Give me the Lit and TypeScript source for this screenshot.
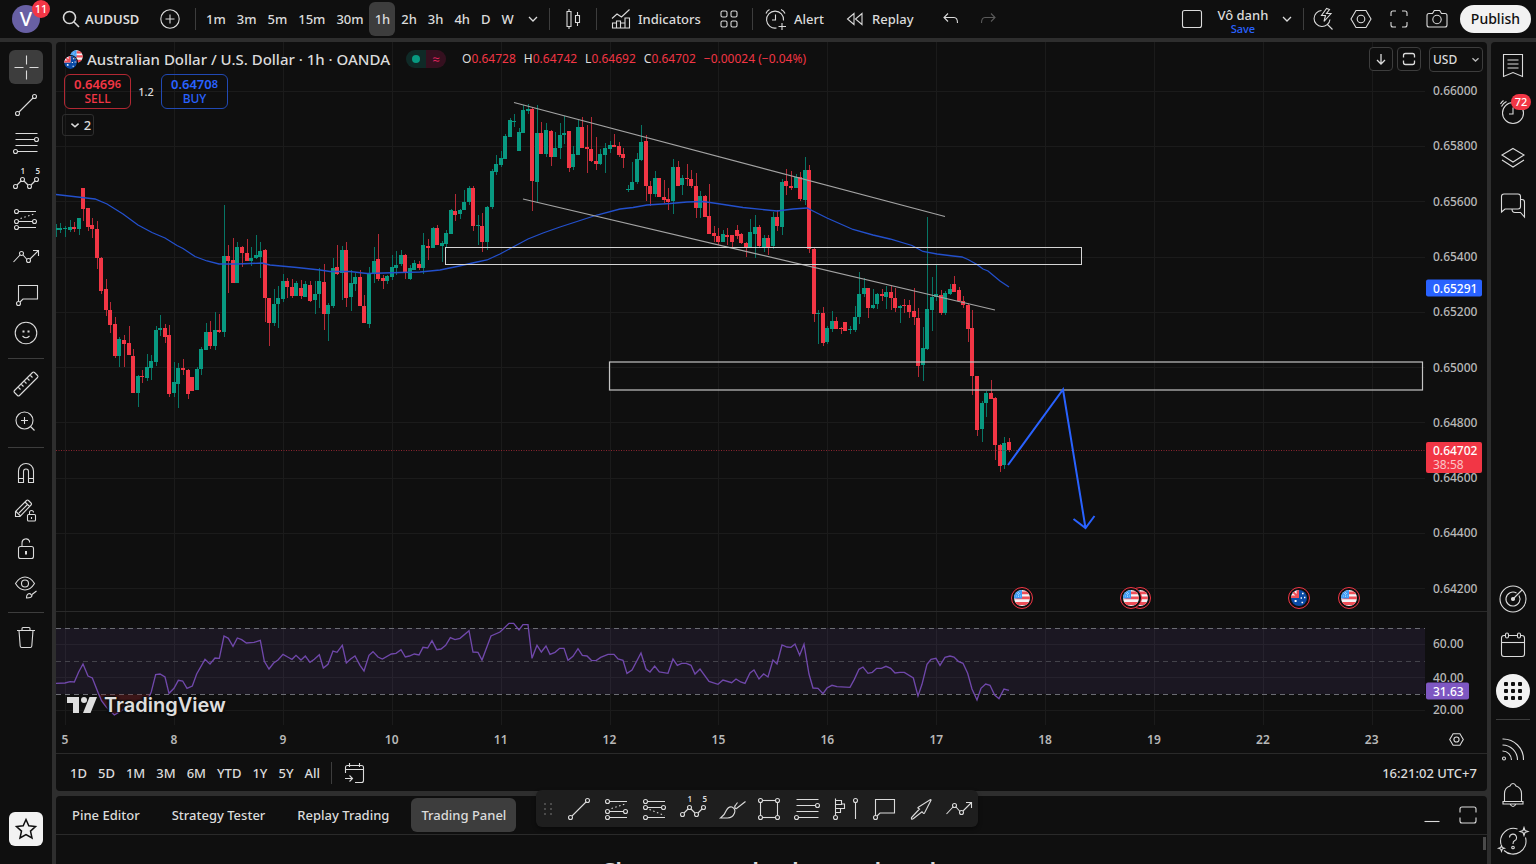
import { LitElement, html, svg, css } from "lit";
import { customElement } from "lit/decorators.js";

/* Area of the plot in chart units: x 56..1425, y 42..725 */
const PLOT = { x: 56, y: 42, w: 1369, h: 683 };
const STEP = 4.5375;
const FIRST_BAR = -2;
const DAY0 = 65;

/* direction, high, body top, body bottom, low */
const BARS = `
g224,228,230,237 g223,228,230,233 g226,228,229,237 g220,227,230,232 r222,227,229,232 g218,218,229,235
r188,188,209,221 r208,208,227,231 r218,225,229,238 r221,229,258,269 r257,258,291,294 r279,289,310,316
r302,310,325,333 r317,324,356,358 g337,339,356,367 r335,340,344,367 r326,343,355,355 r349,356,393,393
g375,376,393,407 r370,376,377,383 g354,367,378,381 g355,361,368,380 g326,330,362,366 g315,328,330,336
r324,328,337,343 r325,335,394,397 g362,382,393,397 g363,368,384,408 r359,368,370,375 r369,370,394,399
r377,377,391,391 g367,369,390,390 g347,349,369,375 g323,332,350,350 r321,332,346,349 g312,330,346,350
r314,330,332,333 g205,256,332,337 r245,256,261,293 r238,260,283,283 g242,247,283,283 r246,247,253,267
r239,253,261,261 g247,258,261,266 g235,255,258,259 g242,251,257,278 r249,250,298,322 r298,298,323,346
g289,304,323,326 g286,298,304,328 g274,281,299,302 r278,281,287,298 r279,287,296,298 g281,283,296,296
r280,288,296,299 g281,284,297,297 r281,285,301,302 g281,294,300,314 g268,281,294,308 r264,282,314,330
g303,305,314,341 g258,268,306,308 r245,267,274,275 g246,250,273,300 r242,250,298,307 g270,283,297,311
g273,277,284,291 r270,277,306,306 r295,306,323,323 g267,274,324,328 g247,261,274,283 r234,259,279,281
r275,278,281,289 g275,276,281,284 g255,267,277,280 g251,265,268,275 g250,255,264,266 r254,255,273,279
g265,268,279,280 g260,263,270,270 r261,264,268,270 g233,245,268,274 r239,246,248,260 g227,228,248,248
r225,228,245,245 g241,243,246,262 g230,233,244,248 g209,210,234,234 r194,211,215,221 g209,210,214,219
g190,202,210,210 g186,188,202,205 r186,188,226,231 g215,225,226,245 r213,226,242,252 g206,207,242,250
g169,171,207,209 g155,164,172,175 g151,158,165,167 g134,136,159,159 g118,120,137,137 g114,121,122,127
g128,132,151,151 g105,110,133,133 g104,109,111,114 r107,109,181,211 g105,133,182,202 r122,133,154,154
g123,130,154,157 r130,131,157,166 g132,148,157,157 g123,135,148,159 g116,133,135,144 r131,131,168,172
g146,154,167,170 g120,127,155,155 r117,127,148,148 r125,147,149,173 r117,149,161,162 r137,161,164,170
g149,154,164,165 g143,148,155,173 g141,145,149,153 r134,145,147,147 r142,146,155,157 r148,154,158,168
g185,189,190,192 g162,182,190,190 g153,159,182,184 g125,142,160,161 r135,141,186,201 r181,186,194,206
g171,178,194,197 r178,178,197,197 r180,197,200,203 r188,199,202,210 g159,167,201,214 r161,167,186,186
g175,178,185,195 r164,178,179,186 r170,179,186,188 r173,186,208,218 g191,196,208,218 r195,196,217,217
r184,216,234,234 r226,233,236,242 r228,236,242,245 g230,234,242,242 r228,235,237,245 r235,235,242,248
r225,230,236,239 r233,234,243,244 r242,243,247,257 g219,232,247,248 g215,227,234,258 r225,227,246,248
g235,238,247,252 r235,238,247,255 g212,217,246,249 r210,217,226,231 g179,182,227,235 r169,181,186,195
r171,186,188,190 g174,177,188,188 r172,177,199,201 g157,170,200,205 r165,170,249,253 r248,249,314,322
g310,313,314,344 r307,313,343,346 g326,328,342,344 g311,321,329,332 r317,321,329,329 r327,328,329,334
r322,322,331,331 g326,329,330,334 g306,317,330,332 g272,294,317,324 g278,288,294,297 r288,288,308,318
g289,305,308,309 g293,294,304,309 r289,294,296,301 g286,292,297,309 r286,292,298,310 r288,298,308,312
g305,306,308,323 r299,305,306,313 r300,305,312,318 r288,311,317,325 r308,318,366,377 g327,348,365,381
g217,309,349,350 g277,297,310,331 g265,294,297,301 r290,295,313,315 g291,293,313,315 g284,289,294,295
r276,284,292,292 r287,290,301,301 r296,301,305,308 r303,305,329,342 r310,328,376,395 r376,376,430,436
g401,403,429,442 g391,393,403,417 r380,393,399,399 r397,398,445,460 r444,445,466,472 g437,443,465,469
r438,442,450,452`
  .trim()
  .split(/\s+/)
  .map((t, i) => {
    const [high, top, bottom, low] = t.slice(1).split(",").map(Number);
    return { up: t[0] === "g", high, top, bottom, low, x: Math.round(DAY0 + STEP * (FIRST_BAR + i)) };
  });

const AVERAGE =
  "56,194.5 82,197.5 95,199 107,204 123,214 138,225 152,232.5 165,238 177,245.5 183,248.5 195,256.5 207,261 219,264 237,264 262,263 270,265 297,267.5 320,270 330,271.5 350,271.5 367,273.5 400,272.5 420,272 440,270 457,266.5 477,262 487,260 500,254 513,247 528,239 543,233 560,227 577,221.5 597,215 620,209 633,207.5 647,205 670,203.5 687,202 703,201.5 717,203.5 743,207.5 767,210 777,211 793,209 807,208 813,211 827,218 853,229.5 873,235 890,239 912,245.5 923,251.5 937,254 953,256 962,257 968,259.5 977,264.5 983,269 988,271 1000,281 1009,287";

/* Oscillator samples, three units to a chart unit */
const RSI =
  "18,250 45,249 60,245 73,246 86,216 99,192 114,228 127,234 145,280 155,303 170,323 193,345 215,332 235,318 262,322 285,305 300,285 304,275 317,224 330,222 345,231 357,280 372,265 385,241 398,243 411,265 427,258 440,222 465,178 480,192 495,174 508,175 522,108 535,115 549,139 562,114 575,119 589,129 612,127 631,121 643,184 657,207 671,189 684,180 699,163 713,171 726,178 738,166 753,180 766,168 780,187 793,178 808,164 820,204 834,193 849,153 861,157 877,136 889,189 902,177 915,168 930,196 942,213 957,166 969,155 984,171 997,177 1024,162 1038,160 1053,149 1066,171 1078,168 1093,162 1107,165 1119,142 1133,144 1146,122 1160,149 1173,147 1187,136 1201,113 1215,119 1230,115 1257,92 1269,156 1284,157 1296,180 1323,108 1350,96 1365,82 1377,70 1391,70 1407,90 1419,74 1434,74 1446,175 1461,136 1474,156 1488,138 1500,163 1515,157 1529,145 1542,145 1554,181 1569,169 1584,146 1597,166 1611,168 1624,181 1638,182 1652,172 1674,163 1692,163 1704,177 1719,181 1731,220 1746,210 1773,159 1788,207 1800,216 1814,198 1828,216 1854,220 1869,177 1882,196 1895,190 1909,190 1923,196 1935,222 1950,207 1977,244 2004,253 2019,240 2045,248 2058,237 2072,246 2085,250 2100,219 2112,210 2127,237 2141,222 2154,231 2169,180 2181,192 2196,135 2211,141 2223,142 2235,132 2249,166 2262,133 2277,222 2289,264 2304,265 2319,281 2331,264 2346,256 2361,260 2400,262 2413,238 2427,208 2439,201 2454,220 2467,217 2480,205 2494,205 2508,199 2522,205 2535,219 2550,217 2563,217 2590,234 2604,288 2616,253 2631,193 2643,178 2658,175 2670,196 2685,172 2700,168 2712,171 2725,184 2739,190 2753,220 2766,267 2781,300 2793,265 2807,252 2820,256 2834,285 2847,296 2862,267 2877,271";

const PRICES = ["0.66000", "0.65800", "0.65600", "0.65400", "0.65200", "0.65000", "0.64800", "0.64600", "0.64400", "0.64200"].map(
  (label, i) => ({ label, y: 91.2 + i * 55.28 }),
);
const LEVELS = [
  { label: "60.00", y: 644.5 },
  { label: "40.00", y: 677.5 },
  { label: "20.00", y: 710 },
];
const DAYS = ["5", "8", "9", "10", "11", "12", "15", "16", "17", "18", "19", "22", "23"].map((label, i) => ({
  label,
  x: DAY0 + i * STEP * 24,
}));

const pctX = (x: number) => `left:${(((x - PLOT.x) / PLOT.w) * 100).toFixed(2)}%`;
const pctY = (y: number) => `top:${(((y - PLOT.y) / PLOT.h) * 100).toFixed(2)}%`;

const usFlag = svg`<circle cx="8" cy="8" r="8" fill="#f4f4f6"/>
  <path d="M8 1.6h4.8A8 8 0 0 1 15 4.2H8zM8 6.6h7.9v2.7H.1V9zM1 12h14a8 8 0 0 1-3.2 3H4.200A8 8 0 0 1 1 12z" fill="#ef4f58"/>
  <path d="M8 0v8.600H0A8 8 0 0 1 8 0z" fill="#3f9df5"/>
  <path d="M3 3.500h4M2 6h5M4.500 2v6" stroke="#bfe0ff" stroke-width=".7" stroke-dasharray="1 1"/>`;
const auFlag = svg`<circle cx="8" cy="8" r="8" fill="#0a4aa5"/>
  <path d="M8 0v8H0A8 8 0 0 1 8 0z" fill="#f3f3f5"/>
  <path d="M5.600 .4 8 0v8H5.600zM.2 5.400H8V8H0zM1.600 3 3 1.500 8 6.500V8H7z" fill="#ef4f58"/>
  <path d="M3.500 11h2.200M4.600 9.900v2.200M11 3.500h1.600M10.500 12.500h1.600M13 7.500h1.400M9.600 8h1.400" stroke="#fff" stroke-width="1.300"/>`;

const node = (x: number, y: number) => svg`<circle cx=${x} cy=${y} r="2"/>`;

const ICONS: Record<string, unknown> = {
  search: svg`<circle cx="12.500" cy="12.500" r="6" stroke-width="1.600"/><path d="m17 17 5 5" stroke-width="1.600"/>`,
  plus: svg`<circle cx="14" cy="14" r="9.200"/><path d="M14 9.500v9M9.500 14h9"/>`,
  chevron: svg`<path d="m10 12 4 4 4-4" stroke-width="1.300"/>`,
  caret: svg`<path d="m9 12 5 4.500 5-4.500" stroke-width="2.200"/>`,
  candles: svg`<path d="M8 6.500h4v15H8zM10 4v2.500M10 21.500V24M16.500 10.500h4v7h-4zM18.500 7v3.500M18.500 17.500V21"/>`,
  indicators: svg`<path d="M5.500 23v-5h4v5M9.500 19v-3h4v7M13.500 18h4.500v5M18 20v-7h4.500v10h-17v-1M5 13.500l5-4.500 4.500 3L22.500 4.500"/>`,
  layout: svg`<rect x="6" y="6" width="6" height="6" rx="1.500"/><rect x="16" y="6" width="6" height="6" rx="1.500"/><rect x="6" y="16" width="6" height="6" rx="1.500"/><rect x="16" y="16" width="6" height="6" rx="1.500"/>`,
  alert: svg`<path d="M21.500 15.500a8.500 8.500 0 1 0-7 7.500M4 8.500a7 7 0 0 1 3.500-4M19 4.500a7 7 0 0 1 4 4M13.500 9.500v5.500H10M20 18v7M16.500 21.500h7.500"/>`,
  replay: svg`<path d="M13 8.500v11L6.500 14zM21 8.500v11L14.500 14z"/>`,
  undo: svg`<path d="m11 8.500-4 4 4 4M7.500 12.500H17q3.500 0 3.500 5.500"/>`,
  redo: svg`<path d="m17 8.500 4 4-4 4M20.500 12.500H11q-3.500 0-3.500 5.500"/>`,
  square: svg`<rect x="4.500" y="5.500" width="19" height="17" rx="2"/>`,
  quick: svg`<path d="M12.500 5.500a8 8 0 1 0 8.500 9M18.500 19.500l5 5M17.500 3.500l-5 7h4l-1.500 6 7-8h-4.500l3-4z"/>`,
  settings: svg`<path d="M9 5.500h10l5 8.500-5 8.500H9L4 14z"/><circle cx="14" cy="14" r="3.800"/>`,
  full: svg`<path d="M6 11V8q0-2 2-2h3M17 6h3q2 0 2 2v3M22 17v3q0 2-2 2h-3M11 22H8q-2 0-2-2v-3"/>`,
  camera: svg`<path d="M6 8.500h3.500l1.800-3h5.400l1.800 3H22q2 0 2 2V20q0 2-2 2H6q-2 0-2-2v-9.500q0-2 2-2z"/><circle cx="14" cy="14.500" r="4.200"/>`,
  cross: svg`<path d="M14.500 2.500v9M14.500 17.500v9M2.500 14.500h9M17.500 14.500h9"/>`,
  trend: svg`${node(5.5, 22.5)}${node(22.5, 5.5)}<path d="M7 21 21 7"/>`,
  fib: svg`<path d="M3.500 4.500h22M3.500 10.500h19M3.500 16.500h22M6 22.500h19.500"/>${node(24.5, 10.5)}${node(3.5, 22.5)}`,
  pattern: svg`${node(3.5, 19.5)}${node(10.5, 12.5)}${node(17.5, 19.5)}${node(24.5, 12.5)}<path d="m5 18 4-4M12 14l4 4M19 18l4-4"/><text x="8.500" y="7">1</text><text x="23.500" y="7">5</text>`,
  forecast: svg`${node(4.5, 6.5)}${node(4.5, 16.5)}${node(22.500, 16.5)}${node(4.5, 22.5)}<path d="M6.500 6.500H24M6.500 16.500h14M6.500 22.500H24"/><path d="m8.500 13.500 15-5" stroke-dasharray="1.500 2.500"/>`,
  position: svg`${node(4.5, 6.5)}${node(4.5, 12.5)}${node(22.500, 12.5)}${node(4.5, 22.5)}<path d="M6.500 6.500H24M6.500 12.500h14M6.500 22.500H24"/><path d="m8.500 14.500 15 6" stroke-dasharray="1.500 2.500"/>`,
  zigzag: svg`<path d="M1.500 19 8 12M11 12l4 4.500M18 16l8.500-8.500M21 7.500h5.500V13"/>${node(9.5, 10.5)}${node(16.5, 17.5)}`,
  callout: svg`<path d="M6.500 20.500V4.500h19v13.500H11L8 21"/>${node(6.5, 22.5)}`,
  smile: svg`<circle cx="14" cy="14" r="10.800"/><path d="M10.500 17q3.500 3.500 7 0"/><path d="M11.500 11.500v2M16.500 11.500v2" stroke-width="2"/>`,
  ruler: svg`<path d="m2.500 20.500 18-18q1-1 2 0l3 3q1 1 0 2l-18 18q-1 1-2 0l-3-3q-1-1 0-2zM6 17l2.500 2.500M9 14l2.500 2.500M12 11l2.500 2.500M15 8l2.500 2.500M18 5l2.500 2.500"/>`,
  zoom: svg`<circle cx="12.500" cy="12.500" r="8.500"/><path d="m18.500 18.500 4 4M12.500 9v7M9 12.500h7"/>`,
  magnet: svg`<path d="M6.500 23.500V12a7.500 7.500 0 0 1 15 0v11.500h-5V12.500a2.500 2.500 0 0 0-5 0v11zM6.500 19.500h5M16.500 19.500h5"/>`,
  pencil: svg`<path d="M3.500 19.500v-5l11-11q1-1 2 0l2.500 2.500q1 1 0 2l-11 11.500zM4 14.500l4.500 4.500M13 5l4.500 4.500M7 16l8-8"/><rect x="15.500" y="17.500" width="8" height="6.500" rx="1"/><path d="M17.500 17.500v-2a2 2 0 0 1 4 0M19.500 20v2"/>`,
  lock: svg`<rect x="6.500" y="11.500" width="15" height="12" rx="2"/><path d="M10 11.500V8a4 4 0 0 1 7.500-2v1.500"/><path d="M14 16v3.500" stroke-width="2"/>`,
  eye: svg`<path d="M3.500 10.500q4-6.500 9.500-6.500t9.500 6.500Q18.500 17 13 17t-9.500-6.500z"/><circle cx="13" cy="10.500" r="3.500"/><path d="M14.500 25q0-4.500 3.500-4.500l2 2q0 2.500-5.500 2.500zM20 21.500l4.500-3.500"/>`,
  trash: svg`<path d="M5 6.500h18M10 6V4.500q0-1 1-1h6q1 0 1 1V6M7 6.500l1.200 15.500q.1 1.500 1.500 1.500h8.600q1.400 0 1.500-1.500L21 6.500"/>`,
  star: svg`<path d="m14 4.500 2.800 6.300 6.700.7-5 4.600 1.500 6.900-6-3.500L8 23l1.500-6.900-5-4.600 6.700-.7z" stroke-width="1.500"/>`,
  brush: svg`<path d="M3.500 23Q8 19.500 9 16q2.500-5 6-4 4 2 2.500 6-2 5-7 5zM18 10.500q-1 2.500 1.500 3.500M19.500 13.500 28.500 6.500M18 11l2.500-3.500"/>`,
  rect: svg`<rect x="5.500" y="5.500" width="17" height="17"/>${[5.5, 22.5].map((x) => [5.5, 22.5].map((y) => svg`<circle cx=${x} cy=${y} r="2" fill="#1e1e1e"/>`))}`,
  profile: svg`<path d="M4.500 3.500v17M4.500 5.500h6v4h-6M10.500 9h3v4.500h-9M4.500 13.500h5v4h-5M24.500 7v17"/>${node(4.5, 22.5)}${node(24.5, 5.5)}`,
  arrow: svg`<path d="M4.500 24q-.5-1 .5-2l7.500-8-1.500-1q-.3-.5.3-.8L23.500 4.500q.8 0 .5.800L17.500 18q-.5.700-1 .3l-1.500-1.500L6.500 23.500q-1.200 1-2 .5z"/>`,
  watch: svg`<path d="M4.500 2.500h19v22L14 20.500l-9.500 4zM8.500 8h11M8.500 12h11M8.500 16h11"/>`,
  clock: svg`<circle cx="14" cy="15" r="10.500"/><path d="M14 9.500V16h-4M2.500 8.500q1.500-3.500 5-5M1.500 6q1-2 3-3.500"/>`,
  layers: svg`<path d="m14 4.500 11 6.500-11 7-11-7zM3 16l11 7 11-7"/>`,
  chat: svg`<path d="M2.500 22V6.500q0-2.500 2.500-2.500h14q2.500 0 2.500 2.500v10q0 2.500-2.500 2.500H6zM21.500 9.500h1.500q2.500 0 2.500 2.500v15l-4-4.500h-5.500q-3 0-3-3.500"/>`,
  target: svg`<circle cx="14" cy="14" r="13"/><path d="M20 10.500A7 7 0 1 1 17.500 8M14 14l9-9"/><circle cx="14" cy="14" r="1.500" fill="currentColor"/>`,
  calendar: svg`<rect x="2.500" y="4.500" width="23" height="21" rx="2.500"/><path d="M2.500 11.500h23"/><rect x="6.500" y="2" width="3" height="5" rx="1.500" fill="#0f0f0f"/><rect x="18.500" y="2" width="3" height="5" rx="1.500" fill="#0f0f0f"/>`,
  feed: svg`<path d="M3.500 4A20.500 20.500 0 0 1 24.500 25M3.500 10A15 15 0 0 1 18.500 25M3.500 16A9 9 0 0 1 12.500 25"/><circle cx="5" cy="23.500" r="1.500"/>`,
  bell: svg`<path d="M5.500 20v-7.500a8 8 0 0 1 5.500-7.500q1-2.500 3-2.500t3 2.500a8 8 0 0 1 5.500 7.500V20M4 20.500h20v2.500H4zM11 23q3 5 6 0"/>`,
  help: svg`<path d="M18.500 2A13 13 0 0 0 2 17.500M5 23.500a13 13 0 0 0 21.500-13M10.500 10.500a3.500 3.500 0 1 1 5 3.300q-1.500.7-1.500 3.200"/><circle cx="14" cy="20.500" r="1.300"/><path d="m25 .5 1 3 3 1-3 1-1 3-1-3-3-1 3-1zM2.500 18.500l.8 2 2.200.8-2.200.8-.8 2.200-.8-2.200-2.200-.8 2.200-.8z"/>`,
  goto: svg`<path d="M5.500 14V8.500q0-2 2-2h14q2 0 2 2v13q0 2-2 2H15M5.500 10.500h18M9.500 4v4M19.500 4v4M5 19.500h7M9.500 16.500l3 3-3 3"/>`,
  down: svg`<path d="M14 9v10M10 15l4 4 4-4" stroke-width="1.300"/>`,
  expand: svg`<path d="M8.500 12.500v-2q0-2 2-2h7q2 0 2 2v2M8.500 15.500v2q0 2 2 2h7q2 0 2-2v-2" stroke-width="1.300"/>`,
  maximize: svg`<path d="M6 11.500V8q0-2 2-2h12q2 0 2 2v3.500M6 16.500V20q0 2 2 2h12q2 0 2-2v-3.500"/>`,
  minimize: svg`<path d="M6.500 20.500h15"/>`,
};

const icon = (name: string) =>
  html`<svg class="icon" viewBox="0 0 28 28" aria-hidden="true">${ICONS[name]}</svg>`;

@customElement("app-root")
export class AppRoot extends LitElement {
  static styles = css`
    :host {
      display: grid;
      grid-template: 38px minmax(0, 1fr) / 52px minmax(0, 1fr) 45px;
      gap: 4px;
      height: 100vh;
      overflow: hidden;
      background: #2e2e2e;
      color: #dbdbdb;
      font: 500 13px/18px "Noto Sans", "Open Sans", sans-serif;
    }
    * { box-sizing: border-box; }
    button {
      display: flex;
      align-items: center;
      justify-content: center;
      margin: 0;
      padding: 0;
      border: 0;
      background: none;
      color: inherit;
      font: inherit;
      white-space: nowrap;
    }
    .icon {
      display: block;
      width: 28px;
      height: 28px;
      flex: none;
      overflow: visible;
      fill: none;
      stroke: currentColor;
      stroke-width: 1.1;
    }
    .icon text { fill: currentColor; stroke: none; font-size: 8px; font-weight: 600; }
    .rule { flex: none; width: 1px; height: 22px; background: #3d3d3d; }

    .top { grid-column: 1 / -1; display: flex; align-items: center; background: #0f0f0f; }
    .avatar {
      position: relative; flex: none;
      width: 28px; height: 28px; margin-left: 12px;
      border-radius: 50%; background: #6860a4; color: #fff; font-size: 20px;
    }
    .badge {
      position: absolute; top: -5px; left: 20px;
      min-width: 18px; height: 18px; border-radius: 9px;
      background: #f23645; color: #fff; font-size: 11px; line-height: 18px; text-align: center;
    }
    .symbol { flex: none; width: 80px; margin-left: 17px; justify-content: flex-start; font-weight: 600; }
    .add { flex: none; width: 38px; margin-right: 6px; margin-left: 14px; }
    .span { height: 34px; padding: 0 5px 0 6px; border-radius: 6px; }
    .span.on { background: #3d3d3d; }
    .spans { display: flex; flex: none; width: 353px; padding-left: 4px; }
    .spans .more { width: 28px; }
    .tool { height: 34px; flex: none; }
    .style { width: 46px; }
    .indicators { width: 114px; justify-content: flex-start; padding-left: 10px; gap: 3px; }
    .grid { width: 36px; margin-right: 5px; }
    .alert { width: 84px; justify-content: flex-start; padding-left: 9px; gap: 4px; }
    .replay { width: 95px; justify-content: flex-start; padding-left: 4px; gap: 3px; }
    .history { width: 37px; }
    .dim { color: #5a5a5a; }
    .right { display: flex; align-items: center; margin-left: auto; padding-right: 5px; }
    .named { flex-direction: column; width: 64px; }
    .named small { color: #2962ff; font-size: 11px; line-height: 9px; }
    .menu { width: 24px; margin-right: 4px; }
    .act { width: 38px; height: 34px; }
    .publish {
      height: 28px; margin-left: 4px; padding: 0 11px;
      border-radius: 14px; background: #f2f2f2; color: #0f0f0f; font-size: 14px;
    }

    .left {
      display: flex; flex-direction: column; align-items: center; gap: 4px;
      padding: 8px 0 18px; border-radius: 0 4px 0 0; background: #0f0f0f;
    }
    .left button { width: 34px; height: 34px; flex: none; border-radius: 6px; }
    .left .on { background: #3d3d3d; }
    .left hr { flex: none; width: 36px; height: 1px; margin: 4px 0; border: 0; background: #3d3d3d; }
    .left .fav { margin-top: auto; background: #f2f2f2; color: #0f0f0f; }

    .side {
      display: flex; flex-direction: column; align-items: flex-start; gap: 2px;
      padding: 2px 0 1px; border-radius: 4px 0 0 0; background: #0f0f0f;
    }
    .side button { position: relative; flex: none; width: 44px; height: 44px; }
    .side .count {
      position: absolute; top: 4px; left: 20px; width: 20px; height: 16px;
      border-radius: 8px; background: #f23645; color: #fff; font-size: 11px; line-height: 16px;
    }
    .side .gap { flex: 1; }
    .side hr { flex: none; width: 34px; height: 1px; margin: 4px 5px 5px; border: 0; background: #3d3d3d; }
    .apps { display: grid; grid-template-columns: repeat(3, 4px); gap: 3px; width: 34px; height: 34px; place-content: center; border-radius: 50%; background: #f2f2f2; }
    .apps i { height: 4px; border-radius: 1px; background: #0f0f0f; }

    .centre { display: grid; grid-template-rows: minmax(0, 1fr) 68px; gap: 5px; min-width: 0; }
    .chart {
      display: grid; grid-template: minmax(0, 1fr) 28px 38px / minmax(0, 1fr) 62px;
      border-radius: 4px; background: #0f0f0f; overflow: hidden;
    }
    .plot { position: relative; min-width: 0; overflow: hidden; }
    .canvas { position: absolute; inset: 0; width: 100%; height: 100%; }
    .axis { position: relative; font-size: 12px; color: #b8b8b8; }
    .tick { position: absolute; left: 8px; line-height: 16px; transform: translateY(-50%); }
    .tag {
      position: absolute; left: 1px; width: 56px; padding: 1px 0 1px 7px; border-radius: 2px;
      color: #fff; line-height: 15px; transform: translateY(-50%);
    }
    .tag.blue { background: #2962ff; }
    .tag.purple { width: 43px; background: #7e57c2; }
    .tag.red { background: #f23645; transform: translateY(-9px); }
    .tag small { display: block; font-size: 12px; line-height: 14px; color: #fbc4c8; font-weight: 400; }
    .split { position: absolute; left: 0; right: 0; height: 1px; background: #2a2a2a; }
    .days { position: relative; overflow: hidden; font-size: 12px; font-weight: 600; color: #b8b8b8; }
    .day { position: absolute; top: 7px; line-height: 16px; transform: translateX(-50%); }
    .corner .icon { width: 19px; height: 19px; stroke-width: 1.6; }
    .ranges {
      grid-column: 1 / -1; display: flex; align-items: center;
      padding: 0 10px 0 8px; border-top: 1px solid #2a2a2a;
    }
    .ranges button { height: 28px; padding: 0 5px 0 6px; }
    .ranges .rule { margin: 0 2px 0 6px; }
    .ranges .clock { margin-left: auto; padding: 0; }

    .legend { position: absolute; top: 6px; left: 6px; display: flex; flex-direction: column; gap: 4px; }
    .title { display: flex; align-items: center; height: 22px; padding-left: 2px; }
    .pair { position: relative; width: 19px; height: 19px; margin-right: 4px; }
    .pair svg { position: absolute; width: 13px; height: 13px; border-radius: 50%; }
    .pair .us { top: 0; right: 0; }
    .pair .au { bottom: 0; left: 0; box-shadow: 0 0 0 1px #0f0f0f; }
    h1 { margin: 0; font-size: 15px; line-height: 20px; font-weight: 500; white-space: nowrap; }
    .status {
      display: grid; grid-template: 18px / 20px 20px; place-items: center;
      margin: 0 16px; border-radius: 9px; color: #e0245e;
      background: linear-gradient(90deg, #0f2a27 50%, #35101f 50%);
    }
    .status i { width: 8px; height: 8px; border-radius: 50%; background: #089981; }
    .ohlc { display: flex; gap: 8px; font-size: 12px; font-weight: 400; }
    .ohlc b { color: #f23645; font-weight: 400; }
    .quotes { display: flex; align-items: center; padding-left: 2px; }
    .quote {
      flex-direction: column; width: 67px; height: 35px; border: 1px solid #b22833; border-radius: 6px;
      color: #f23645; font-size: 12px; line-height: 14px;
    }
    .quote.buy { border-color: #2149b4; color: #2962ff; }
    .quote strong { font-size: 13px; font-weight: 600; line-height: 15px; }
    .quote sup { font-size: 11px; line-height: 1px; vertical-align: 1px; }
    .spread { width: 30px; font-size: 11px; text-align: center; }
    .fold { width: 32px; height: 22px; margin-top: 1px; border: 1px solid #2e2e2e; border-radius: 3px; }
    .fold .icon { width: 20px; height: 20px; margin-right: -1px; }
    .panes { position: absolute; top: 5px; right: 4px; display: flex; gap: 4px; }
    .panes button { width: 24px; height: 24px; border: 1px solid #3d3d3d; border-radius: 4px; background: #0f0f0f; }
    .currency { position: absolute; top: 5px; left: 4px; width: 54px; height: 25px; }
    .currency select {
      appearance: none; width: 100%; height: 100%; padding: 0 3px; border: 1px solid #3d3d3d; border-radius: 4px;
      background: #0f0f0f; color: #dbdbdb; font: inherit;
    }
    .currency .icon { position: absolute; top: 4px; right: -1px; width: 17px; height: 17px; pointer-events: none; }
    .event { position: absolute; width: 22px; height: 22px; padding: 2px; border: 1px solid #f23645; border-radius: 50%; background: #0f0f0f; transform: translate(-50%, -50%); }
    .event svg { display: block; width: 16px; height: 16px; }
    .brand {
      position: absolute; bottom: 8px; left: 11px; display: flex; align-items: center; gap: 7px;
      color: #dedede; font: 600 20px/24px Inter, sans-serif;
      text-shadow: 0 0 2px #0f0f0f, 1px 1px 1px #0f0f0f, -1px -1px 1px #0f0f0f, 2px 0 2px #0f0f0f, -2px 0 2px #0f0f0f;
    }
    .brand svg { display: block; width: 30px; height: 16px; fill: #dedede; }

    .bottom { position: relative; border-radius: 4px 4px 0 0; background: #0f0f0f; min-width: 0; }
    .tabs { display: flex; align-items: center; gap: 12px; height: 39px; padding: 0 5px 0 6px; border-bottom: 1px solid #2a2a2a; }
    .tabs button { height: 34px; padding: 0 10px; border-radius: 6px; }
    .tabs .on { background: #3d3d3d; }
    .tabs .win { width: 28px; padding: 0; }
    .tabs .first { margin-left: auto; margin-right: -4px; }
    .body { position: relative; height: 29px; overflow: hidden; }
    .body h2 { margin: 20px 0 0 544px; font-size: 24px; line-height: 32px; font-weight: 600; white-space: nowrap; }
    .thumb { position: absolute; top: 2px; right: 1px; width: 3px; height: 13px; background: #4a4a4a; }
    .drawbar {
      position: absolute; top: -6px; left: 480px; display: flex; align-items: center;
      height: 37px; border-radius: 6px; background: #1e1e1e; box-shadow: 0 2px 4px rgba(0, 0, 0, 0.4);
    }
    .drawbar button { width: 38px; height: 37px; }
    .grip { display: grid; grid-template: repeat(3, 2px) / repeat(2, 2px); gap: 3px 4px; width: 24px; place-content: center; }
    .grip i { background: #4a4a4a; }
  `;

  private top() {
    const spans = ["1m", "3m", "5m", "15m", "30m", "1h", "2h", "3h", "4h", "D", "W"];
    return html`<header class="top">
      <button class="avatar" aria-label="Profile">V<span class="badge">11</span></button>
      <button class="symbol">${icon("search")}AUDUSD</button>
      <button class="add" aria-label="Compare">${icon("plus")}</button>
      <span class="rule"></span>
      <div class="spans">
        ${spans.map((s) => html`<button class="span ${s === "1h" ? "on" : ""}">${s}</button>`)}
        <button class="more" aria-label="More intervals">${icon("chevron")}</button>
      </div>
      <span class="rule"></span>
      <button class="tool style" aria-label="Chart type">${icon("candles")}</button>
      <span class="rule"></span>
      <button class="tool indicators">${icon("indicators")}Indicators</button>
      <button class="tool grid" aria-label="Templates">${icon("layout")}</button>
      <span class="rule"></span>
      <button class="tool alert">${icon("alert")}Alert</button>
      <button class="tool replay">${icon("replay")}Replay</button>
      <button class="tool history" aria-label="Undo">${icon("undo")}</button>
      <button class="tool history dim" aria-label="Redo">${icon("redo")}</button>
      <div class="right">
        <button class="act" aria-label="Layout">${icon("square")}</button>
        <button class="named"><span>Vô danh</span><small>Save</small></button>
        <button class="menu" aria-label="Layouts">${icon("chevron")}</button>
        <span class="rule"></span>
        ${["quick", "settings", "full", "camera"].map((n) => html`<button class="act" aria-label=${n}>${icon(n)}</button>`)}
        <button class="publish">Publish</button>
      </div>
    </header>`;
  }

  private left() {
    const groups = [
      ["cross", "trend", "fib", "pattern", "forecast", "zigzag", "callout", "smile"],
      ["ruler", "zoom"],
      ["magnet", "pencil", "lock", "eye"],
      ["trash"],
    ];
    return html`<nav class="left">
      ${groups.map(
        (g, i) => html`${i ? html`<hr />` : ""}${g.map(
          (n) => html`<button class=${n === "cross" ? "on" : ""} aria-label=${n}>${icon(n)}</button>`,
        )}`,
      )}
      <button class="fav" aria-label="Favourites">${icon("star")}</button>
    </nav>`;
  }

  private side() {
    const b = (n: string, extra: unknown = "") => html`<button aria-label=${n}>${icon(n)}${extra}</button>`;
    return html`<aside class="side">
      ${b("watch")}${b("clock", html`<span class="count">72</span>`)}${b("layers")}${b("chat")}
      <span class="gap"></span>
      ${b("target")}${b("calendar")}
      <button aria-label="Apps"><span class="apps">${Array.from({ length: 9 }, () => html`<i></i>`)}</span></button>
      <hr />
      ${b("feed")}${b("bell")}${b("help")}
    </aside>`;
  }

  private canvas() {
    const right = PLOT.x + PLOT.w;
    return html`<svg class="canvas" viewBox="${PLOT.x} ${PLOT.y} ${PLOT.w} ${PLOT.h}" preserveAspectRatio="none" aria-hidden="true">
      <g stroke="#1b1b1b" shape-rendering="crispEdges">
        ${DAYS.map((d) => svg`<path d="M${Math.round(d.x)}.5 42V725"/>`)}
        ${[...PRICES, ...LEVELS].map((p) => svg`<path d="M56 ${Math.floor(p.y)}.5H${right}"/>`)}
      </g>
      <rect x="56" y="628" width=${PLOT.w} height="66" fill="#7e57c2" fill-opacity=".11" />
      <g stroke="#6b6c73" stroke-dasharray="5 4" shape-rendering="crispEdges">
        <path d="M56 628.500H${right}" /><path d="M56 694.500H${right}" />
        <path d="M56 661.500H${right}" stroke="#44434b" />
      </g>
      <path d="M98 694.500 106 707 114 715 128 706 145 704 151 694.500z" fill="#5a1a1e" fill-opacity=".6" />
      <polyline points=${RSI} transform="translate(50 600) scale(.33333)" fill="none" stroke="#7048ab" stroke-width="4" />
      <g shape-rendering="crispEdges">
        ${BARS.map(
          (b) => svg`<rect x=${b.x} y=${b.high} width="1" height=${b.low - b.high} fill=${b.up ? "#077565" : "#b52a36"}/>
            <rect x=${b.x - 2} y=${b.top} width="4" height=${Math.max(1, b.bottom - b.top)} fill=${b.up ? "#089981" : "#f23645"}/>`,
        )}
      </g>
      <polyline points=${AVERAGE} fill="none" stroke="#2350cc" stroke-width="1.300" />
      <path d="M56 450.500H${right}" stroke="#8a2530" stroke-dasharray="1 1.500" />
      <g fill="none" stroke="#a3a3a3" stroke-width="1.200">
        <path d="M514 102.500 945 216.500M523 199 995 310" />
        <rect x="445.500" y="247.500" width="636" height="17" stroke="#d5d5d5" stroke-width="1" />
        <rect x="609.500" y="362" width="813" height="28" stroke="#c4c4c4" />
      </g>
      <path d="M1008 465 1063 389.500 1085.500 528M1073.500 519 1085.500 528 1094.500 516" fill="none" stroke="#2962ff" stroke-width="2" />
    </svg>`;
  }

  private chart() {
    const event = (x: number, flag: unknown) =>
      html`<button class="event" style="${pctX(x)};${pctY(598)}" aria-label="Economic event"><svg viewBox="0 0 16 16">${flag}</svg></button>`;
    const quote: [string, string][] = [["O", "0.64728"], ["H", "0.64742"], ["L", "0.64692"], ["C", "0.64702"]];
    return html`<section class="chart">
      <div class="plot">
        ${this.canvas()}
        <div class="split" style=${pctY(611)}></div>
        <div class="legend">
          <div class="title">
            <span class="pair"><svg class="us" viewBox="0 0 16 16">${usFlag}</svg><svg class="au" viewBox="0 0 16 16">${auFlag}</svg></span>
            <h1>Australian Dollar / U.S. Dollar · 1h · OANDA</h1>
            <span class="status"><i></i><span>≈</span></span>
            <span class="ohlc">${quote.map(([k, v]) => html`<span>${k}<b>${v}</b></span>`)}<b>−0.00024 (−0.04%)</b></span>
          </div>
          <div class="quotes">
            <button class="quote"><strong>0.6469<sup>6</sup></strong>SELL</button>
            <span class="spread">1.2</span>
            <button class="quote buy"><strong>0.6470<sup>8</sup></strong>BUY</button>
          </div>
          <button class="fold">${icon("caret")}2</button>
        </div>
        <div class="panes">
          <button aria-label="Move pane down">${icon("down")}</button>
          <button aria-label="Maximise pane">${icon("expand")}</button>
        </div>
        ${event(1022, usFlag)}${event(1140, usFlag)}${event(1131, usFlag)}${event(1299, auFlag)}${event(1349, usFlag)}
        <div class="brand">
          <svg viewBox="0 0 30 16" aria-hidden="true"><path d="M0 0h12v16H6V6H0z" /><circle cx="17" cy="3" r="3" /><path d="M22.500 0H30l-6.500 16H16z" /></svg>
          <span>TradingView</span>
        </div>
      </div>
      <div class="axis">
        <label class="currency"><select aria-label="Currency"><option>USD</option></select>${icon("caret")}</label>
        ${[...PRICES, ...LEVELS].map((p) => html`<span class="tick" style=${pctY(p.y)}>${p.label}</span>`)}
        <div class="split" style=${pctY(611)}></div>
        <span class="tag blue" style=${pctY(288)}>0.65291</span>
        <span class="tag red" style=${pctY(451)}>0.64702<small>38:58</small></span>
        <span class="tag purple" style=${pctY(691)}>31.63</span>
      </div>
      <div class="days">${DAYS.map((d) => html`<span class="day" style=${pctX(d.x)}>${d.label}</span>`)}</div>
      <button class="corner" aria-label="Axis settings">${icon("settings")}</button>
      <div class="ranges">
        ${["1D", "5D", "1M", "3M", "6M", "YTD", "1Y", "5Y", "All"].map((r) => html`<button>${r}</button>`)}
        <span class="rule"></span>
        <button aria-label="Go to date">${icon("goto")}</button>
        <button class="clock">16:21:02 UTC+7</button>
      </div>
    </section>`;
  }

  private bottom() {
    return html`<section class="bottom">
      <div class="tabs">
        <button>Pine Editor</button><button>Strategy Tester</button><button>Replay Trading</button>
        <button class="on">Trading Panel</button>
        <button class="win first" aria-label="Minimise">${icon("minimize")}</button>
        <button class="win" aria-label="Maximise">${icon("maximize")}</button>
      </div>
      <div class="body"><h2>Choose your broker and trade</h2><span class="thumb"></span></div>
      <div class="drawbar">
        <span class="grip">${Array.from({ length: 6 }, () => html`<i></i>`)}</span>
        ${["trend", "forecast", "position", "pattern", "brush", "rect", "fib", "profile", "callout", "arrow", "zigzag"].map(
          (n) => html`<button aria-label=${n}>${icon(n)}</button>`,
        )}
      </div>
    </section>`;
  }

  render() {
    return html`${this.top()}${this.left()}
      <main class="centre">${this.chart()}${this.bottom()}</main>
      ${this.side()}`;
  }
}
